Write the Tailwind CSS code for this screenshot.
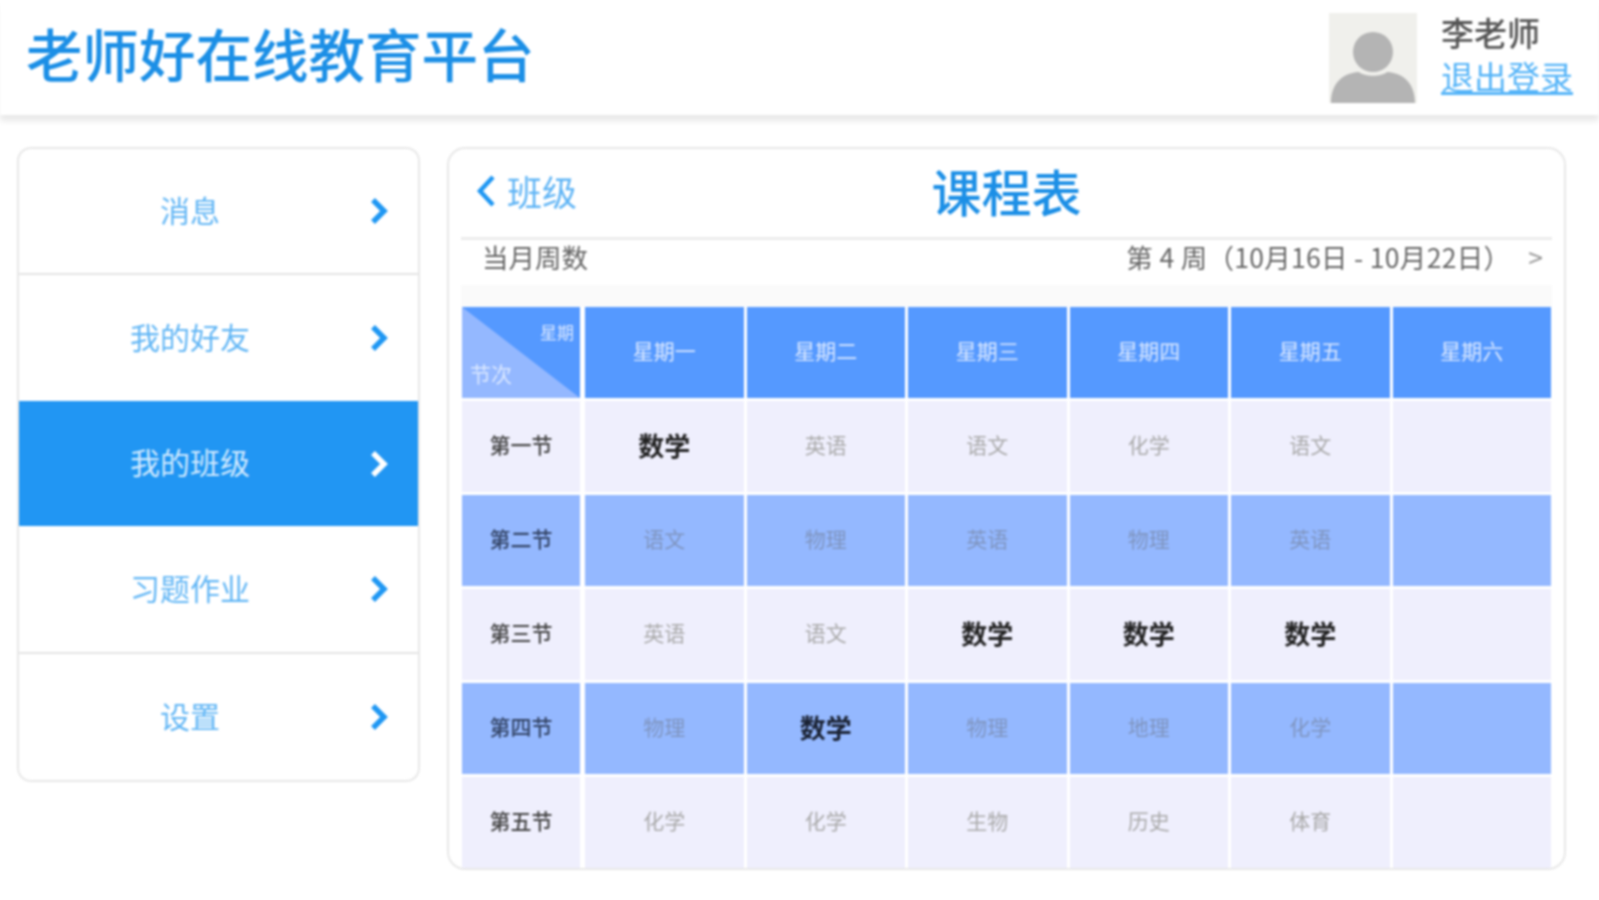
<!DOCTYPE html>
<html lang="zh-CN">
<head>
    <meta charset="UTF-8">
    <title>老师好在线教育平台</title>
    <script src="https://cdn.jsdelivr.net/npm/@tailwindcss/browser@4"></script>
</head>
<body class="bg-white h-[900px] w-[1599px] overflow-hidden font-['Noto_Sans_CJK_SC',sans-serif]">
<div class="blur-[1px]">
    <!-- Header -->
    <header class="h-[115px] flex items-center justify-between pl-[26px] pr-[24px] bg-white shadow-[0_6px_6px_rgba(0,0,0,0.09)]">
        <h1 class="text-[56.5px] leading-none font-medium text-[#1c8fe6] pb-[10px]">老师好在线教育平台</h1>
        <div class="flex items-center gap-[24px]">
            <svg class="w-[88px] h-[90px]" viewBox="0 0 88 90">
                <rect width="88" height="90" fill="#f0f0ec"/>
                <circle cx="44" cy="39" r="20" fill="#b4b4b4"/>
                <path d="M2 90 C2 72 12 60 30 59 C36 64 52 64 58 59 C76 60 86 72 86 90 Z" fill="#b4b4b4"/>
            </svg>
            <div class="flex flex-col w-[134px] pb-[7px]">
                <span class="text-[33px] leading-[44px] font-medium text-[#555555]">李老师</span>
                <a class="text-[33px] leading-[44px] text-[#55b4f8] underline">退出登录</a>
            </div>
        </div>
    </header>

    <div class="flex items-start pt-[32px] pl-[17px] gap-[27px]">
        <!-- Side menu -->
        <nav class="w-[403px] h-[635px] border-2 border-[#e8e8e8] rounded-[14px] overflow-hidden flex flex-col text-[30px] text-[#62b6f5]">
            <a class="h-[126px] flex items-center border-b-2 border-[#e4e4e4]">
                <span class="w-[342px] text-center pb-[4px]">消息</span>
                <svg class="w-[20px] h-[28px] ml-[8px]" viewBox="0 0 20 28" fill="none" stroke="#1f97f3" stroke-width="5.5"><path d="M4 3 L15 14 L4 25"/></svg>
            </a>
            <a class="h-[126px] flex items-center">
                <span class="w-[342px] text-center pb-[4px]">我的好友</span>
                <svg class="w-[20px] h-[28px] ml-[8px]" viewBox="0 0 20 28" fill="none" stroke="#1f97f3" stroke-width="5.5"><path d="M4 3 L15 14 L4 25"/></svg>
            </a>
            <a class="h-[125px] flex items-center bg-[#2196f3] text-[#cfe9ff]">
                <span class="w-[342px] text-center pb-[4px]">我的班级</span>
                <svg class="w-[20px] h-[28px] ml-[8px]" viewBox="0 0 20 28" fill="none" stroke="#ffffff" stroke-width="5.5"><path d="M4 3 L15 14 L4 25"/></svg>
            </a>
            <a class="h-[128px] flex items-center border-b-2 border-[#e4e4e4]">
                <span class="w-[342px] text-center pb-[4px]">习题作业</span>
                <svg class="w-[20px] h-[28px] ml-[8px]" viewBox="0 0 20 28" fill="none" stroke="#1f97f3" stroke-width="5.5"><path d="M4 3 L15 14 L4 25"/></svg>
            </a>
            <a class="flex-1 flex items-center">
                <span class="w-[342px] text-center pb-[4px]">设置</span>
                <svg class="w-[20px] h-[28px] ml-[8px]" viewBox="0 0 20 28" fill="none" stroke="#1f97f3" stroke-width="5.5"><path d="M4 3 L15 14 L4 25"/></svg>
            </a>
        </nav>

        <!-- Schedule panel -->
        <main class="w-[1119px] h-[723px] border-2 border-[#e8e8e8] rounded-[18px] px-[12px] overflow-hidden">
            <div class="relative h-[91px] flex items-center justify-center pb-[7px] border-b-[3px] border-[#ececec]">
                <a class="absolute left-[14px] top-[24px] flex items-center gap-[10px] text-[35px] leading-none text-[#5fb4f5]">
                    <svg class="w-[22px] h-[34px]" viewBox="0 0 22 34" fill="none" stroke="#1f97f3" stroke-width="4.5"><path d="M18 3 L5 17 L18 31"/></svg>
                    班级
                </a>
                <h2 class="text-[50px] leading-none font-medium text-[#1c8fe6]">课程表</h2>
            </div>
            <div class="h-[45px] flex items-center justify-between pb-[11px] pl-[21px] pr-[9px] text-[26.5px] leading-none text-[#666666]">
                <span>当月周数</span>
                <div class="flex items-center gap-[18px]">
                    <span class="tracking-[0.3px]">第 4 周（10月16日 - 10月22日）</span>
                    <span class="text-[#999999]">&gt;</span>
                </div>
            </div>
            <div class="h-[22px] bg-[#fafafa]"></div>

            <!-- Timetable -->
            <div class="grid grid-cols-[120px_repeat(6,1fr)] grid-rows-[91px_repeat(5,91px)] gap-[3px] pl-[1px] pr-[1px] text-[21px] text-[#aaaaaa] text-center [&>div]:flex [&>div]:items-center [&>div]:justify-center [&>div]:pb-[4px]">
                <div class="relative bg-[#5599ff] mr-[2px]">
                    <svg class="absolute inset-0 w-full h-full" viewBox="0 0 118 91" preserveAspectRatio="none"><path d="M0 0 L118 91 L0 91 Z" fill="#94b8ff"/></svg>
                    <span class="absolute right-[6px] top-[16px] text-[17px] leading-none text-[#dbe8ff]">星期</span>
                    <span class="absolute left-[8px] bottom-[14px] text-[21px] leading-none text-[#dbe8ff]">节次</span>
                </div>
                <div class="bg-[#5599ff] text-[#dbe8ff]">星期一</div>
                <div class="bg-[#5599ff] text-[#dbe8ff]">星期二</div>
                <div class="bg-[#5599ff] text-[#dbe8ff]">星期三</div>
                <div class="bg-[#5599ff] text-[#dbe8ff]">星期四</div>
                <div class="bg-[#5599ff] text-[#dbe8ff]">星期五</div>
                <div class="bg-[#5599ff] text-[#dbe8ff]">星期六</div>

                <div class="bg-[#efeffd] mr-[2px] font-medium text-[#444444]">第一节</div>
                <div class="bg-[#efeffd] text-[26px] font-bold text-[#222222]">数学</div>
                <div class="bg-[#efeffd]">英语</div>
                <div class="bg-[#efeffd]">语文</div>
                <div class="bg-[#efeffd]">化学</div>
                <div class="bg-[#efeffd]">语文</div>
                <div class="bg-[#efeffd]"></div>

                <div class="bg-[#94b8ff] mr-[2px] font-medium text-[#334466]">第二节</div>
                <div class="bg-[#94b8ff] text-[#7f95c0]">语文</div>
                <div class="bg-[#94b8ff] text-[#7f95c0]">物理</div>
                <div class="bg-[#94b8ff] text-[#7f95c0]">英语</div>
                <div class="bg-[#94b8ff] text-[#7f95c0]">物理</div>
                <div class="bg-[#94b8ff] text-[#7f95c0]">英语</div>
                <div class="bg-[#94b8ff]"></div>

                <div class="bg-[#efeffd] mr-[2px] font-medium text-[#444444]">第三节</div>
                <div class="bg-[#efeffd]">英语</div>
                <div class="bg-[#efeffd]">语文</div>
                <div class="bg-[#efeffd] text-[26px] font-bold text-[#222222]">数学</div>
                <div class="bg-[#efeffd] text-[26px] font-bold text-[#222222]">数学</div>
                <div class="bg-[#efeffd] text-[26px] font-bold text-[#222222]">数学</div>
                <div class="bg-[#efeffd]"></div>

                <div class="bg-[#94b8ff] mr-[2px] font-medium text-[#334466]">第四节</div>
                <div class="bg-[#94b8ff] text-[#7f95c0]">物理</div>
                <div class="bg-[#94b8ff] text-[26px] font-bold text-[#1a2233]">数学</div>
                <div class="bg-[#94b8ff] text-[#7f95c0]">物理</div>
                <div class="bg-[#94b8ff] text-[#7f95c0]">地理</div>
                <div class="bg-[#94b8ff] text-[#7f95c0]">化学</div>
                <div class="bg-[#94b8ff]"></div>

                <div class="bg-[#efeffd] mr-[2px] font-medium text-[#444444]">第五节</div>
                <div class="bg-[#efeffd]">化学</div>
                <div class="bg-[#efeffd]">化学</div>
                <div class="bg-[#efeffd]">生物</div>
                <div class="bg-[#efeffd]">历史</div>
                <div class="bg-[#efeffd]">体育</div>
                <div class="bg-[#efeffd]"></div>
            </div>
        </main>
    </div>
</div>
</body>
</html>
